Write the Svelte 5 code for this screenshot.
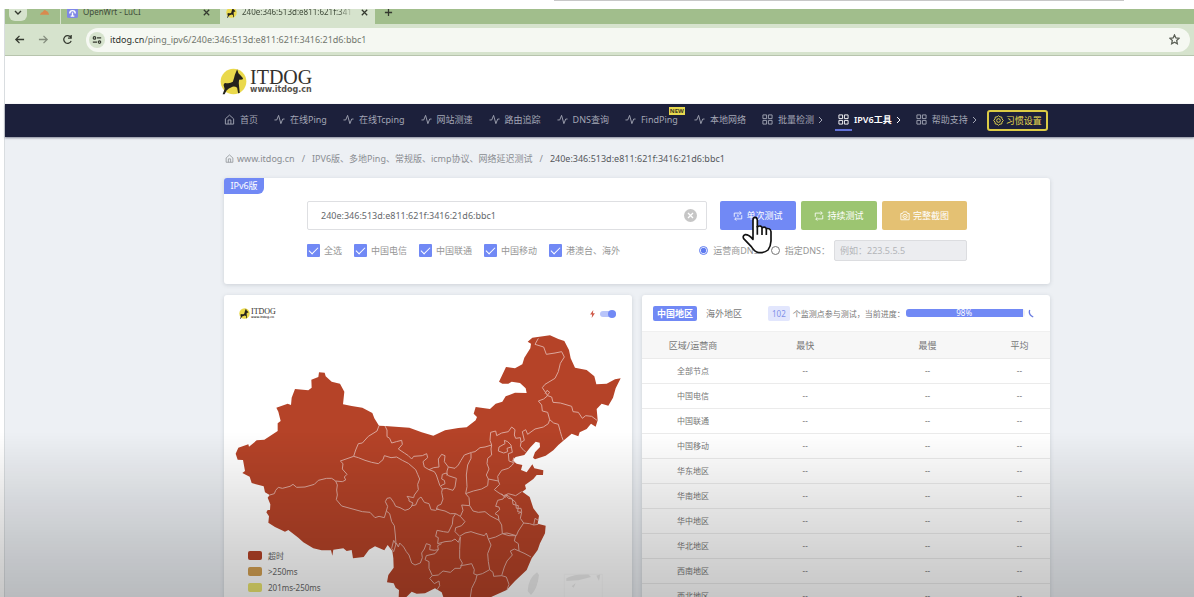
<script>
	let address = '240e:346:513d:e811:621f:3416:21d6:bbc1';
	let customDns = '';
	let dnsMode = 'isp';
	let region = 'cn';
	let fastMode = true;
	let progress = 98;

	const menu = [
		{ label: '首页', icon: 'home' },
		{ label: '在线Ping', icon: 'pulse' },
		{ label: '在线Tcping', icon: 'pulse' },
		{ label: '网站测速', icon: 'pulse' },
		{ label: '路由追踪', icon: 'pulse' },
		{ label: 'DNS查询', icon: 'pulse' },
		{ label: 'FindPing', icon: 'pulse', badge: 'NEW' },
		{ label: '本地网络', icon: 'pulse' },
		{ label: '批量检测', icon: 'grid', more: true },
		{ label: 'IPV6工具', icon: 'grid', more: true, active: true },
		{ label: '帮助支持', icon: 'grid', more: true }
	];

	let lines = [
		{ label: '全选', checked: true },
		{ label: '中国电信', checked: true },
		{ label: '中国联通', checked: true },
		{ label: '中国移动', checked: true },
		{ label: '港澳台、海外', checked: true }
	];

	const rows = [
		'全部节点',
		'中国电信',
		'中国联通',
		'中国移动',
		'华东地区',
		'华南地区',
		'华中地区',
		'华北地区',
		'西南地区',
		'西北地区'
	];

	const legend = [
		{ label: '超时', tone: 'timeout' },
		{ label: '>250ms', tone: 'slow' },
		{ label: '201ms-250ms', tone: 'medium' }
	];

	const mainland =
		'M32 476L40 458 70 448 72 455 95 436 118 434 158 408 158 385 167 378 160 350 154 338 188 326 198 330 200 308 210 282 250 286 260 278 259 254 280 246 282 232 299 233 302 244 320 260 345 266 358 290 354 328 380 333 412 338 442 354 448 370 462 392 480 393 553 398 590 412 625 422 660 406 700 399 725 397 752 376 756 366 746 356 752 336 795 342 812 326 832 320 842 304 870 293 905 294 902 280 885 264 860 260 850 266 832 266 822 260 843 216 870 220 892 208 898 188 916 160 918 146 908 140 922 128 975 121 1000 132 1018 138 1032 165 1037 190 1050 218 1085 225 1108 244 1114 268 1145 266 1170 253 1187 250 1172 280 1164 308 1150 332 1130 326 1115 342 1118 376 1112 395 1098 386 1085 402 1064 412 1060 424 1040 416 1015 437 1000 450 985 466 962 482 930 493 924 488 930 472 945 456 944 443 932 440 915 458 898 480 872 486 862 496 875 506 892 510 888 525 905 532 922 508 928 520 955 526 954 540 935 540 925 552 900 570 903 582 892 590 914 606 925 640 942 662 938 686 962 692 960 715 945 745 938 765 920 790 905 825 870 858 845 885 800 905 760 930 660 930 655 906 650 892 630 880 600 895 575 896 560 890 545 905 520 930 522 885 512 878 506 865 486 862 490 840 506 818 505 790 502 768 488 750 478 766 450 754 432 764 416 786 384 790 380 765 365 768 355 760 325 764 322 782 318 766 290 766 265 760 235 742 220 728 190 705 180 710 150 696 130 683 132 664 124 652 128 645 135 645 136 628 128 608 134 600 120 592 116 574 80 564 74 545 52 534 60 528 54 495 38 494Z';

	const borders = [
		'M134 600L148 596 152 586 160 577 172 580 195 574 204 568 215 577 240 576 268 568 280 556 305 550 320 550 332 558 352 560 362 555 358 546 366 538 352 522 354 506 346 498 386 484 392 465 400 446 412 444 430 424 456 408 462 392',
		'M332 558L337 570 335 585 337 600 334 614 350 633 390 644 412 650 435 652 450 668 462 664 478 668 484 648',
		'M386 484L400 488 420 496 440 502 460 506 474 494 478 482 498 488 515 486 532 496 550 505 572 524 578 538 584 552 578 568 580 584 568 600 566 608 546 604 552 612 552 618 564 624 560 632 572 630 580 612 588 606 598 622 612 626 618 644 632 646 640 640',
		'M484 648L488 634 481 620 486 610 496 608 506 622 512 634 525 638 540 646 552 642 562 632',
		'M484 648L494 656 500 680 508 692 511 720 513 748 506 736 500 760 506 770 514 744 520 756 524 744 536 756 544 770 552 780 560 804 570 810 586 804 592 788 590 774 598 762 604 746 616 750',
		'M480 393L486 405 486 425 494 430 500 444 514 440 530 436 532 448 520 462 538 474 550 482 560 492 566 484 592 482 605 476 608 488 594 500 598 516 612 524 626 518 642 516 640 492 650 478 660 482 658 500 670 516 690 520 700 510 708 496 718 480 740 472 750 470 765 458 780 456 800 450 795 436 797 412 812 408 815 422 830 414 850 410 860 396 870 404 868 420 872 430 886 428 888 442 898 436 892 410 902 404 908 418 930 402 955 396 970 386 974 374 986 384',
		'M612 524L628 530 634 540 644 570 652 582 664 580 684 586 690 576 694 550 670 542 664 534 652 538 650 552 658 556 660 566 648 572',
		'M670 516L666 528 666 542',
		'M652 582L650 592 654 612 648 628 638 632 634 642 660 648 676 656 692 656 706 664',
		'M738 474L738 490 728 510 724 540 726 575 722 596 732 608 734 632 710 630 714 646 708 660 706 664',
		'M722 596L745 588 770 582 788 572 790 552 784 540 792 522 786 506 788 490 800 480 798 462 800 450',
		'M790 552L820 558 824 568 808 584 822 594 836 602 850 596 872 602 890 590',
		'M820 558L818 544 830 526 850 520 862 510 868 500',
		'M822 456L840 446 838 436 848 440 858 450 862 472 850 476 852 498 864 502 866 488 M822 456L820 468 836 474 848 470 846 460 858 456',
		'M888 442L886 454 896 466 902 470',
		'M974 374L968 352 952 348 950 330 940 318 956 312 968 302 980 306 984 322 1006 324 1020 328 1040 334 1044 350 1060 352 1072 370 1082 362 1100 364 1116 376',
		'M986 384L1000 388 1006 410 1010 424 1015 437',
		'M968 302L952 278 960 268 990 250 1000 230 1006 205 1018 186 1010 170 990 174 964 178 956 156 930 148 940 130',
		'M960 296L966 286 974 292 966 302',
		'M734 632L744 648 760 652 780 650 795 662 810 670 822 676 820 662 810 656 824 644 822 636 812 634 818 616 834 612 842 600',
		'M842 600L850 610 862 612 864 628 880 632 878 650 890 652 886 670 896 684 880 708 874 722 846 714 832 716 830 690 822 676',
		'M830 596L840 608 846 600 856 608 872 622 874 640 888 640 890 650 880 656 M896 684L914 686 926 690 930 670 940 676 M926 690L940 688',
		'M706 664L720 680 710 692 692 698 690 710 704 724 720 714 738 710 756 716 778 722 784 714 790 732 812 726 832 716 852 722 872 722',
		'M692 656L684 668 682 688 670 712 656 710 636 706 632 724 640 728 638 746 660 740 680 738 690 732 700 742 706 726',
		'M616 750L614 764 628 766 640 764 638 752 650 746 M604 782L600 794 612 800 612 820 622 842 614 850 628 866 642 858 644 872 636 884',
		'M640 764L630 776 604 782',
		'M622 842L640 840 654 828 676 832 690 820 706 820 712 804 704 790 704 764 706 726',
		'M706 812L720 810 740 806 748 824 746 836 756 840 752 856 740 880 736 906',
		'M790 732L798 750 788 776 790 800 794 824 772 836 756 840',
		'M794 824L804 832 806 844 830 842 838 816 846 798 862 780 856 768 868 762 882 768',
		'M872 722L868 738 880 746 882 768 900 776 918 786',
		'M830 842L844 846 852 868 846 884'
	];
</script>

{#snippet icon(name)}
	<svg class="icon" viewBox="0 0 24 24" aria-hidden="true">
		{#if name === 'home'}
			<path d="M3 10.5 12 2.5l9 8V22H3zM9 22v-9h6v9" />
		{:else if name === 'pulse'}
			<path d="M1 13h5L10 3l5 18 4-10h4" />
		{:else if name === 'grid'}
			<path d="M2 2h8v8H2zM14 2h8v8h-8zM2 14h8v8H2zM14 14h8v8h-8z" />
		{:else if name === 'gear'}
			<path d="M12 1.5 15 4l4 .5.7 4L22.500 12l-2.800 3.500-.7 4-4 .5-3 2.500L9 20l-4-.5-.7-4L1.500 12l2.800-3.500.7-4L9 4z" />
			<circle cx="12" cy="12" r="4" />
		{:else if name === 'once'}
			<path d="M3 14V5h16M16 1l4 4-4 4M21 10v9H5M8 15l-4 4 4 4M10.500 10 12 9v6" />
		{:else if name === 'loop'}
			<path d="M3 14V5h16M16 1l4 4-4 4M21 10v9H5M8 15l-4 4 4 4" />
		{:else if name === 'camera'}
			<path d="M2 6h4l2-4h8l2 4h4v15H2z" />
			<circle cx="12" cy="13" r="5" />
			<circle cx="12" cy="13" r="1" />
		{/if}
	</svg>
{/snippet}

{#snippet dog()}
	<svg class="dog" viewBox="0 0 80 82" aria-hidden="true">
		<circle cx="40" cy="41" r="39" fill="#ead94c" />
		<path
			d="M51 4 55 16 61 22 69 31 67 35 57 36Q55 46 57 56L59 76 54 77 51 60Q44 55 37 57L26 62 19 68 13 80H7L13 64 10 52Q11 44 18 46 30 48 38 42 42 30 44 21Z"
			fill="#25221c"
		/>
	</svg>
{/snippet}

<div class="screen">
	<div class="behind"><span></span></div>
	<div class="window">
		<div class="tabs">
			<div class="tab-row">
				<button class="tab-search" aria-label="搜索标签页">
					<svg viewBox="0 0 10 10"><path d="M2 4l3 3 3-3" /></svg>
				</button>
				<svg class="cloud" viewBox="0 0 12 8"><path d="M1 7Q2 4 4 4 6 0 8 3 10 3 11 7Z" /></svg>
				<div class="tab">
					<svg class="fav" viewBox="0 0 12 12">
						<rect width="12" height="12" rx="2" fill="#7f87e6" />
						<path d="M3 7a3 3 0 1 1 6 0M6 6v4M4 10h4" fill="none" stroke="#fff" stroke-width="1.500" />
					</svg>
					<span class="tab-title">OpenWrt - LuCI</span>
					<button class="close" aria-label="关闭标签页">
						<svg viewBox="0 0 10 10"><path d="M2 2l6 6M8 2l-6 6" /></svg>
					</button>
				</div>
				<div class="tab current">
					<span class="fav">{@render dog()}</span>
					<span class="tab-title fade">240e:346:513d:e811:621f:341</span>
					<button class="close" aria-label="关闭标签页">
						<svg viewBox="0 0 10 10"><path d="M2 2l6 6M8 2l-6 6" /></svg>
					</button>
				</div>
				<button class="close new-tab" aria-label="新标签页">
					<svg viewBox="0 0 10 10"><path d="M5 1v8M1 5h8" /></svg>
				</button>
			</div>
		</div>
		<div class="toolbar">
			<button aria-label="后退"><svg viewBox="0 0 12 12"><path d="M11 6H2M6 2 2 6l4 4" /></svg></button>
			<button class="off" aria-label="前进"><svg viewBox="0 0 12 12"><path d="M1 6h9M6 2l4 4-4 4" /></svg></button>
			<button aria-label="刷新">
				<svg viewBox="0 0 12 12"><path d="M10 7.500A4.200 4.200 0 1 1 9.500 3.500M10 1v3.500H6.500" /></svg>
			</button>
			<div class="url">
				<span class="site">
					<svg viewBox="0 0 12 12"><path d="M6 3.500h5M1 8.500h5" /><circle cx="3" cy="3.500" r="1.500" /><circle cx="9" cy="8.500" r="1.500" /></svg>
				</span>
				<span class="url-text"><b>itdog.cn</b>/ping_ipv6/{address}</span>
				<button class="star" aria-label="收藏">
					<svg viewBox="0 0 12 12"><path d="M6 1l1.500 3.300 3.500.4-2.600 2.400.7 3.500L6 8.900 2.900 10.600l.7-3.500L1 4.700l3.500-.4z" /></svg>
				</button>
			</div>
		</div>

		<header class="brand-bar">
			<a class="logo" href="#home" aria-label="ITDOG">
				{@render dog()}
				<span class="wordmark"><strong>ITDOG</strong><small>www.itdog.cn</small></span>
			</a>
		</header>

		<nav class="menu">
			{#each menu as item}
				<a href="#menu" class:active={item.active}>
					{@render icon(item.icon)}
					<span>{item.label}</span>
					{#if item.more}
						<svg class="chevron" viewBox="0 0 4 8" aria-hidden="true"><path d="M0 1l3 3-3 3" /></svg>
					{/if}
					{#if item.badge}<em>{item.badge}</em>{/if}
				</a>
			{/each}
			<button class="prefs">{@render icon('gear')}习惯设置</button>
		</nav>

		<main>
			<div class="crumbs">
				<a href="#home">{@render icon('home')}www.itdog.cn</a>
				<i>/</i>
				<span>IPV6版、多地Ping、常规版、icmp协议、网络延迟测试</span>
				<i>/</i>
				<span class="here">{address}</span>
			</div>

			<section class="card form">
				<span class="tag">IPv6版</span>
				<div class="line">
					<div class="address">
						<input type="text" aria-label="测试地址" bind:value={address} />
						<button class="clear" aria-label="清空" on:click={() => (address = '')}>
							<svg viewBox="0 0 13 13"><circle cx="6.500" cy="6.500" r="6.500" /><path d="M4 4l5 5M9 4l-5 5" /></svg>
						</button>
					</div>
					<div class="actions">
						<button class="once">{@render icon('once')}单次测试</button>
						<button class="loop">{@render icon('loop')}持续测试</button>
						<button class="shot">{@render icon('camera')}完整截图</button>
						<svg class="pointer" viewBox="0 0 90 114" aria-hidden="true">
							<path
								d="M33 62V12Q33 4 39 4T46 12V32Q58 27 60 35 70 31 73 38 84 35 87 47V75Q86 92 78 102 68 111 50 110 38 108 28 92L5 68Q1 59 9 56 20 55 33 70Z"
							/>
							<path d="M46 30V56M60 35V57M73 38V57" />
						</svg>
					</div>
				</div>
				<div class="line options">
					<div class="checks">
						{#each lines as line}
							<label><input type="checkbox" bind:checked={line.checked} />{line.label}</label>
						{/each}
					</div>
					<div class="dns">
						<label><input type="radio" name="dns" value="isp" bind:group={dnsMode} />运营商DNS</label>
						<label><input type="radio" name="dns" value="custom" bind:group={dnsMode} />指定DNS：</label>
						<input
							class="dns-text"
							type="text"
							aria-label="指定DNS"
							placeholder="例如：223.5.5.5"
							disabled={dnsMode !== 'custom'}
							bind:value={customDns}
						/>
					</div>
				</div>
			</section>

			<div class="panels">
				<section class="card map">
					<svg class="china" viewBox="-3 0 1224 930" role="img" aria-label="中国地图">
						<path class="land" d={mainland} />
						{#each borders as d}
							<path class="border" {d} />
						{/each}
						<path class="isle" d="M936 832Q910 850 908 888L918 900Q938 880 942 840Z" />
						<path class="isle" d="M1024 850Q1050 836 1090 838L1098 846 1060 856 1024 858ZM1114 842L1126 838 1122 858ZM1040 874L1052 864 1046 878Z" />
						<path class="frame" d="M1018 930V838H1132V930" />
					</svg>
					<div class="map-head">
						<span class="logo small">
							{@render dog()}
							<span class="wordmark"><strong>ITDOG</strong><small>www.itdog.cn</small></span>
						</span>
						<label class="fast">
							<svg viewBox="0 0 6 10" aria-hidden="true"><path d="M4 0 0 5.500h2.500L2 10l4-6H3.500z" /></svg>
							<input type="checkbox" aria-label="极速模式" bind:checked={fastMode} />
						</label>
					</div>
					<ul class="legend">
						{#each legend as entry}
							<li><span class={entry.tone}></span>{entry.label}</li>
						{/each}
					</ul>
				</section>

				<section class="card results">
					<div class="results-head">
						<button class:on={region === 'cn'} on:click={() => (region = 'cn')}>中国地区</button>
						<button class:on={region === 'sea'} on:click={() => (region = 'sea')}>海外地区</button>
						<span class="count">102</span>
						<span class="note">个监测点参与测试，当前进度：</span>
						<div class="bar" role="progressbar" aria-label="当前进度" aria-valuenow={progress}>
							<div style="width: {progress}%">{progress}%</div>
						</div>
						<svg class="spinner" viewBox="0 0 8 10" aria-hidden="true"><path d="M2 1q-2 5 4 8" /></svg>
					</div>
					<table>
						<thead>
							<tr><th>区域/运营商</th><th>最快</th><th>最慢</th><th>平均</th></tr>
						</thead>
						<tbody>
							{#each rows as row}
								<tr><td>{row}</td><td>--</td><td>--</td><td>--</td></tr>
							{/each}
						</tbody>
					</table>
				</section>
			</div>
		</main>
	</div>
	<div class="shade"></div>
</div>

<style>
	:global(body) {
		margin: 0;
		background: #fff;
		font-family: 'Noto Sans', 'Noto Sans CJK SC', sans-serif;
		font-size: 9px;
		color: #777;
	}

	:global(*) {
		box-sizing: border-box;
	}

	.screen {
		height: 100vh;
		overflow: hidden;
	}

	.behind {
		height: 9px;
		padding: 0 70px 0 554px;
	}

	.behind span {
		display: block;
		height: 1px;
		background: #c8c8c8;
	}

	.window {
		margin-left: 4px;
		border-left: 1px solid #d9dde0;
		background: #edf0f4;
	}

	button {
		padding: 0;
		border: 0;
		background: none;
		font: inherit;
		color: inherit;
		cursor: pointer;
	}

	a {
		color: inherit;
		text-decoration: none;
	}

	svg {
		display: block;
		flex: none;
	}

	.icon {
		width: 11px;
		height: 11px;
		fill: none;
		stroke: currentColor;
		stroke-width: 2;
	}

	/* browser frame */
	.tabs {
		display: flex;
		align-items: flex-end;
		height: 15px;
		overflow: hidden;
		background: #a1be8c;
		color: #3f4a3a;
		font-size: 8px;
	}

	.tab-row {
		display: flex;
		align-items: center;
		height: 24px;
	}

	.tab-search {
		width: 18px;
		height: 18px;
		margin-left: 4px;
		padding: 4px;
		border-radius: 6px;
		background: #d6e3cd;
	}

	.tab-search svg,
	.close svg,
	.toolbar svg {
		width: 100%;
		fill: none;
		stroke: #34392f;
		stroke-width: 1.4;
	}

	.cloud {
		width: 11px;
		height: 8px;
		margin: 0 10px 0 12px;
		fill: #d98a4e;
	}

	.tab {
		display: flex;
		align-items: center;
		gap: 5px;
		width: 160px;
		height: 24px;
		padding: 0 9px 0 6px;
		border-left: 1px solid #d6e3cd;
	}

	.tab.current {
		width: 155px;
		padding: 0 6px;
		border: 0;
		border-radius: 8px 8px 0 0;
		background: #d6e3cd;
	}

	.fav {
		flex: none;
		width: 11px;
		height: 11px;
	}

	.tab-title {
		flex: 1;
		line-height: 24px;
		white-space: nowrap;
	}

	.fade {
		mask-image: linear-gradient(90deg, #000 85%, transparent);
	}

	.close {
		width: 9px;
		height: 9px;
	}

	.new-tab {
		margin-left: 9px;
	}

	.toolbar {
		display: flex;
		align-items: center;
		gap: 13px;
		height: 32px;
		padding: 0 4px 0 9px;
		border-bottom: 1px solid #b7c4ad;
		background: #d6e3cd;
	}

	.toolbar button {
		width: 11px;
		height: 11px;
	}

	.toolbar .off {
		opacity: 0.5;
	}

	.toolbar .star {
		opacity: 0.8;
	}

	.url {
		flex: 1;
		display: flex;
		align-items: center;
		gap: 5px;
		height: 24px;
		padding: 0 10px 0 3px;
		border-radius: 12px;
		background: #f5f8f2;
	}

	.site {
		width: 16px;
		height: 16px;
		padding: 3px;
		border-radius: 50%;
		background: #d6e3cd;
	}

	.url-text {
		flex: 1;
		color: #71766d;
	}

	.url-text b {
		font-weight: 400;
		color: #2d302b;
	}

	/* site header */
	.brand-bar {
		display: flex;
		align-items: center;
		height: 48px;
		padding: 3px 0 0 215px;
		background: #fff;
	}

	.logo {
		display: flex;
		align-items: center;
		gap: 3px;
		color: #33302c;
	}

	.dog {
		width: 27px;
		height: 27px;
	}

	.fav .dog {
		width: 11px;
		height: 11px;
	}

	.wordmark {
		display: flex;
		flex-direction: column;
	}

	.wordmark strong {
		font: 400 20px/17px 'Liberation Serif', serif;
	}

	.wordmark small {
		color: #55524e;
		font: 700 8px/8px 'DejaVu Sans', sans-serif;
	}

	.menu {
		display: flex;
		align-items: center;
		gap: 16px;
		height: 33px;
		padding: 0 0 2px 219px;
		background: #1c203b;
		box-shadow: 0 1px 2px rgba(28, 32, 59, 0.5);
		color: #a3a6b5;
		white-space: nowrap;
	}

	.menu a {
		position: relative;
		display: flex;
		align-items: center;
		gap: 5px;
	}

	.menu .active {
		color: #fff;
		font-weight: 600;
	}

	.menu .active::after {
		content: '';
		position: absolute;
		left: -3px;
		bottom: -5px;
		width: 17px;
		height: 2px;
		background: #6272d8;
	}

	.chevron {
		width: 4px;
		height: 8px;
		margin-right: -1px;
		fill: none;
		stroke: currentColor;
	}

	.menu em {
		position: absolute;
		right: -7px;
		top: -6px;
		padding: 0 1px;
		background: #e8d94f;
		color: #3b3822;
		font: 700 6px/8px 'Noto Sans', sans-serif;
	}

	.prefs {
		display: flex;
		align-items: center;
		gap: 2px;
		height: 21px;
		margin: 2px 0 0 -5px;
		padding: 0 4px;
		border: 2px solid #dccb45;
		border-radius: 3px;
		color: #e8d94f;
	}

	main {
		margin: 0 144px 0 219px;
	}

	.crumbs {
		display: flex;
		align-items: center;
		gap: 7px;
		height: 42px;
		padding-left: 1px;
		color: #8a8d92;
	}

	.crumbs a {
		display: flex;
		align-items: center;
		gap: 3px;
	}

	.crumbs .icon,
	.crumbs a :global(svg) {
		width: 9px;
		height: 9px;
	}

	.crumbs i {
		font-style: normal;
	}

	.crumbs .here {
		color: #55585c;
	}

	.card {
		border-radius: 3px;
		background: #fff;
		box-shadow: 0 1px 4px rgba(60, 70, 90, 0.18);
	}

	.form {
		height: 106px;
		margin-top: -1px;
		padding-right: 83px;
	}

	.tag {
		display: block;
		width: 40px;
		height: 16px;
		border-radius: 3px 0 6px 0;
		background: #7189f5;
		color: #fff;
		line-height: 16px;
		text-align: center;
	}

	.line {
		display: flex;
		gap: 13px;
		margin: 7px 0 0 83px;
	}

	.address {
		flex: 1;
		display: flex;
		align-items: center;
		height: 29px;
		padding: 0 9px 0 13px;
		border: 1px solid #dedfe2;
		border-radius: 2px;
	}

	.address input {
		flex: 1;
		padding: 0;
		border: 0;
		outline: 0;
		font: inherit;
		color: #65686c;
	}

	.clear svg {
		width: 13px;
		height: 13px;
		fill: #c6c6c6;
	}

	.clear path {
		stroke: #fff;
		stroke-width: 1.3;
	}

	.actions {
		position: relative;
		display: flex;
		gap: 5px;
	}

	.actions button {
		display: flex;
		align-items: center;
		justify-content: center;
		gap: 3px;
		width: 76px;
		height: 29px;
		border-radius: 2px;
		color: #fff;
	}

	.actions .icon {
		width: 10px;
		height: 10px;
	}

	.actions .once {
		background: #7189f5;
	}

	.actions .loop {
		background: #9cc571;
	}

	.actions .shot {
		width: 85px;
		background: #e4c173;
	}

	.pointer {
		position: absolute;
		left: 22px;
		top: 15px;
		width: 30px;
		height: 38px;
		fill: #fff;
		stroke: #111;
		stroke-width: 5;
		stroke-linejoin: round;
	}

	.options {
		justify-content: space-between;
		align-items: center;
		margin-top: 10px;
		color: #969696;
	}

	.checks,
	.dns {
		display: flex;
		align-items: center;
		gap: 12px;
	}

	.options label {
		display: flex;
		align-items: center;
		gap: 4px;
	}

	.checks input {
		appearance: none;
		display: grid;
		place-items: center;
		width: 13px;
		height: 13px;
		margin: 0;
		border-radius: 1px;
		background: #c8ccd8;
	}

	.checks input:checked {
		background: #7189f5;
	}

	.checks input::before {
		content: '';
		width: 8px;
		height: 4px;
		border: solid #fff;
		border-width: 0 0 1px 1px;
		transform: translateY(-1px) rotate(-45deg);
	}

	.dns label {
		gap: 5px;
	}

	.dns [type='radio'] {
		width: 9px;
		height: 9px;
		margin: 0;
		accent-color: #5f7bf0;
	}

	.dns-text {
		width: 133px;
		height: 21px;
		margin-left: -8px;
		padding: 0 5px;
		border: 1px solid #dcdde0;
		border-radius: 2px;
		background: #ecedf0;
		font: inherit;
	}

	.dns-text::placeholder {
		color: #b3b5b9;
	}

	.panels {
		display: grid;
		grid-template-columns: 1fr 1fr;
		gap: 10px;
		margin-top: 11px;
	}

	.map {
		position: relative;
	}

	.china {
		width: 100%;
	}

	.land {
		fill: #b54328;
	}

	.border {
		fill: none;
		stroke: #dca79c;
		stroke-width: 3;
		stroke-linejoin: round;
	}

	.isle {
		fill: #ececec;
	}

	.frame {
		fill: none;
		stroke: #f6f6f6;
		stroke-width: 2;
	}

	.map-head {
		position: absolute;
		inset: 13px 16px auto 15px;
		display: flex;
		justify-content: space-between;
		align-items: center;
	}

	.small {
		gap: 1px;
	}

	.small .dog,
	.small :global(svg) {
		width: 11px;
		height: 11px;
	}

	.small strong {
		font-size: 8px;
		line-height: 8px;
	}

	.small small {
		font-size: 3px;
		line-height: 3px;
	}

	.fast {
		display: flex;
		align-items: center;
		gap: 5px;
	}

	.fast svg {
		width: 5px;
		height: 8px;
		fill: #cf5a49;
	}

	.fast input {
		appearance: none;
		display: flex;
		justify-content: flex-end;
		align-items: center;
		width: 16px;
		height: 6px;
		margin: 0;
		border-radius: 3px;
		background: #b9c5fa;
	}

	.fast input::before {
		content: '';
		width: 8px;
		height: 8px;
		border-radius: 50%;
		background: #7189f5;
	}

	.legend {
		position: absolute;
		left: 24px;
		top: 252px;
		margin: 0;
		padding: 0;
		list-style: none;
		color: #666;
		font-size: 8px;
	}

	.legend li {
		display: flex;
		align-items: center;
		gap: 6px;
		height: 16px;
	}

	.legend span {
		width: 14px;
		height: 9px;
		border-radius: 2px;
	}

	.timeout {
		background: #b54328;
	}

	.slow {
		background: #d3a053;
	}

	.medium {
		background: #eae570;
	}

	.results-head {
		display: flex;
		align-items: center;
		height: 36px;
		padding: 0 15px 0 11px;
		font-size: 8px;
		white-space: nowrap;
	}

	.results-head button {
		height: 15px;
		padding: 0 4px;
		border-radius: 2px;
		font-size: 9px;
	}

	.results-head button + button {
		margin-left: 5px;
	}

	.results-head .on {
		background: #7189f5;
		color: #fff;
		font-weight: 600;
	}

	.count {
		margin: 0 3px 0 22px;
		padding: 0 4px;
		border-radius: 2px;
		background: #e2e6fd;
		color: #7f90e8;
		line-height: 15px;
	}

	.bar {
		flex: 1;
		height: 8px;
		margin-left: 1px;
		border-radius: 3px;
		background: #f0f1f5;
	}

	.bar div {
		height: 8px;
		border-radius: 3px 0 0 3px;
		background: #7189f5;
		color: #fff;
		line-height: 8px;
		text-align: center;
	}

	.spinner {
		width: 7px;
		height: 9px;
		margin-left: 3px;
		fill: none;
		stroke: #6a7de0;
		stroke-width: 1.5;
	}

	table {
		width: 100%;
		table-layout: fixed;
		border-collapse: collapse;
		font-size: 8px;
		text-align: center;
	}

	th {
		height: 27px;
		padding: 0;
		border-top: 1px solid #f0f0f0;
		background: #f7f7f7;
		font-size: 9px;
		font-weight: 400;
	}

	th:nth-child(1) {
		width: 25%;
	}

	th:nth-child(2),
	th:nth-child(3) {
		width: 30%;
	}

	td {
		height: 25px;
		padding: 0 0 2px;
		border-top: 1px solid #ebebeb;
	}

	/* dark fade along the bottom of the screen */
	.shade {
		position: fixed;
		inset: auto 0 0;
		height: 165px;
		background: linear-gradient(rgba(0, 0, 0, 0), rgba(0, 0, 0, 0.1) 42%, rgba(0, 0, 0, 0.18) 78%, rgba(0, 0, 0, 0.22));
		pointer-events: none;
	}
</style>
